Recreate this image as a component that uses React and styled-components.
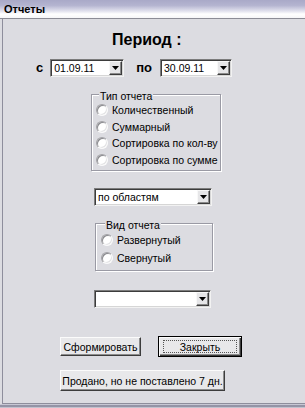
import React from 'react';
import styled, { createGlobalStyle } from 'styled-components';

const GlobalStyle = createGlobalStyle`
  html, body {
    margin: 0;
    padding: 0;
    background: #dcdce1;
  }
  body {
    font-family: "Liberation Sans", Arial, sans-serif;
    font-size: 11px;
    color: #000;
  }
`;

const Window = styled.div`
  width: 305px;
  height: 408px;
  display: flex;
  flex-direction: column;
  overflow: hidden;
  background: #dcdce1;
`;

const TitleBar = styled.div`
  flex: none;
  height: 19px;
  box-sizing: border-box;
  padding: 4px 0 0 4px;
  background: linear-gradient(#a9a9c8 0%, #b4b4d0 30%, #e2e2ee 62%, #ffffff 78%, #f6f6f8 100%);
  border-bottom: 1px solid #8c8c96;
  font-weight: bold;
  font-size: 11px;
  line-height: 11px;
  color: #000;
`;

const Body = styled.div`
  flex: 1;
  display: flex;
  flex-direction: column;
  align-items: flex-start;
  margin-left: 2px;
  border-left: 1px solid #8e8e9c;
  border-bottom: 1px solid #8e8e9c;
`;

const BottomEdge = styled.div`
  flex: none;
  height: 4px;
  box-sizing: border-box;
  background: #c2c2ce;
  border-top: 1px solid #c8c8d4;
  box-shadow: inset 0 2px 0 #9494a6;
`;

const Heading = styled.div`
  margin: 11px 0 0 109px;
  font-size: 16px;
  line-height: 19px;
  font-weight: bold;
`;

const DateRow = styled.div`
  display: flex;
  align-items: center;
  margin: 10px 0 0 33px;
`;

const RowLabel = styled.span`
  font-size: 13px;
  font-weight: bold;
  line-height: 18px;
  margin: ${p => p.$margin};
`;

const Combo = styled.div`
  display: flex;
  width: ${p => p.$w}px;
  height: 18px;
  box-sizing: border-box;
  margin: ${p => p.$margin || '0'};
  background: #fff;
  border: 1px solid;
  border-color: #7c7c7c #f2f2f2 #f2f2f2 #7c7c7c;
  box-shadow: inset 1px 1px 0 #3c3c3c, inset -1px -1px 0 #d6d6d6;
`;

const ComboText = styled.span`
  flex: 1;
  padding: 1px 0 0 3px;
  font-size: 10.5px;
  line-height: 14px;
  white-space: nowrap;
  overflow: hidden;
`;

const ArrowButton = styled.span`
  flex: none;
  width: 13px;
  margin: 1px 1px 1px 0;
  box-sizing: border-box;
  display: flex;
  align-items: center;
  justify-content: center;
  background: #e6e6e8;
  border: 1px solid;
  border-color: #f8f8f8 #3c3c3c #3c3c3c #f8f8f8;
  box-shadow: inset -1px -1px 0 #8a8a8a;
`;

const GroupBox = styled.div`
  width: ${p => p.$w}px;
  box-sizing: border-box;
  margin: ${p => p.$margin};
  padding: 0 0 ${p => p.$pb}px ${p => p.$pl}px;
  border: 1px solid #9a9aa4;
  box-shadow: 1px 1px 0 #fff, inset 1px 1px 0 #fff;
`;

const GroupTitle = styled.div`
  width: fit-content;
  margin: -4px 0 0 ${p => p.$indent}px;
  padding: 0 1px;
  background: #dcdce1;
  font-size: 10.5px;
  line-height: 11px;
  white-space: nowrap;
`;

const RadioRow = styled.label`
  display: flex;
  align-items: center;
  height: ${p => p.$h}px;
  font-size: 10.5px;
  white-space: nowrap;
`;

const RadioDot = styled.span`
  flex: none;
  width: 12px;
  height: 12px;
  box-sizing: border-box;
  margin-right: 4px;
  border-radius: 50%;
  border: 1px solid;
  border-color: #a2a2a6 #fafafa #fafafa #a2a2a6;
  background: #fff;
  box-shadow: inset 1px 1px 0 #8a8a8e, inset -1px -1px 0 #e2e2e4;
`;

const ButtonRow = styled.div`
  display: flex;
  align-items: center;
  margin: ${p => p.$margin};
`;

const Button = styled.button`
  width: ${p => p.$w}px;
  height: ${p => p.$h || 19}px;
  box-sizing: border-box;
  padding: 0;
  margin: ${p => p.$margin || '0'};
  font-family: "Liberation Sans", Arial, sans-serif;
  font-size: 10.5px;
  color: #000;
  background: #e8e8ea;
  border: 1px solid;
  border-color: #fbfbfb #3c3c3c #3c3c3c #fbfbfb;
  box-shadow: inset -1px -1px 0 #8c8c8c;
  white-space: nowrap;
`;

const DefaultButton = styled.button`
  display: flex;
  width: ${p => p.$w}px;
  height: 21px;
  box-sizing: border-box;
  padding: 3px 4px;
  margin: ${p => p.$margin || '0'};
  font-family: "Liberation Sans", Arial, sans-serif;
  font-size: 10.5px;
  color: #000;
  background: #e8e8ea;
  border: 1px solid #000;
  box-shadow: inset 1px 1px 0 #fbfbfb, inset -1px -1px 0 #3c3c3c, inset -2px -2px 0 #8c8c8c;
`;

const FocusLabel = styled.span`
  flex: 1;
  display: flex;
  align-items: center;
  justify-content: center;
  border: 1px dotted #555;
`;

const Arrow = () => (
  <svg width="7" height="4" viewBox="0 0 7 4">
    <path d="M0 0h7L3.5 4z" fill="#000" />
  </svg>
);

const Dropdown = ({ value, w, margin }) => (
  <Combo $w={w} $margin={margin}>
    <ComboText>{value}</ComboText>
    <ArrowButton><Arrow /></ArrowButton>
  </Combo>
);

const Radio = ({ label, h }) => (
  <RadioRow $h={h}>
    <RadioDot />
    {label}
  </RadioRow>
);

const reportTypes = [
  'Количественный',
  'Суммарный',
  'Сортировка по кол-ву',
  'Сортировка по сумме',
];

const reportViews = ['Развернутый', 'Свернутый'];

export default function App() {
  return (
    <>
      <GlobalStyle />
      <Window>
        <TitleBar>Отчеты</TitleBar>
        <Body>
          <Heading>Период :</Heading>

          <DateRow>
            <RowLabel $margin="0 7px 0 0">с</RowLabel>
            <Dropdown value="01.09.11" w={74} />
            <RowLabel $margin="0 8px 0 12px">по</RowLabel>
            <Dropdown value="30.09.11" w={72} />
          </DateRow>

          <GroupBox $w={130} $margin="17px 0 0 88px" $pl={4} $pb={2}>
            <GroupTitle $indent={3}>Тип отчета</GroupTitle>
            {reportTypes.map(t => (
              <Radio key={t} label={t} h={16.5} />
            ))}
          </GroupBox>

          <Dropdown value="по областям" w={118} margin="17px 0 0 91px" />

          <GroupBox $w={118} $margin="17px 0 0 92px" $pl={5} $pb={3}>
            <GroupTitle $indent={4}>Вид отчета</GroupTitle>
            {reportViews.map(v => (
              <Radio key={v} label={v} h={18} />
            ))}
          </GroupBox>

          <Dropdown value="" w={117} margin="19px 0 0 91px" />

          <ButtonRow $margin="28px 0 0 57px">
            <Button $w={81}>Сформировать</Button>
            <DefaultButton $w={84} $margin="0 0 0 17px">
              <FocusLabel>Закрыть</FocusLabel>
            </DefaultButton>
          </ButtonRow>

          <ButtonRow $margin="13px 0 0 57px">
            <Button $w={165} $h={21}>Продано, но не поставлено 7 дн.</Button>
          </ButtonRow>
        </Body>
        <BottomEdge />
      </Window>
    </>
  );
}
